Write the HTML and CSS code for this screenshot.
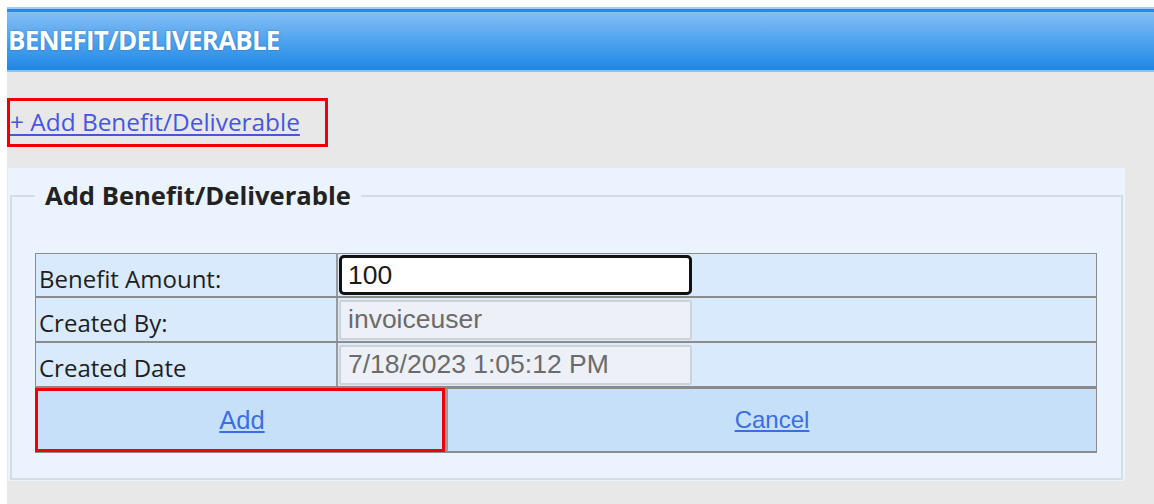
FILE: index.html
```html
<!DOCTYPE html>
<html lang="en">
<head>
<meta charset="utf-8">
<title>Benefit/Deliverable</title>
<link rel="stylesheet" href="styles.css">
</head>
<body>
<div class="page">
  <div class="section-bar">
    <h1 class="section-title">BENEFIT/DELIVERABLE</h1>
  </div>

  <div class="add-row">
    <a href="#" class="add-link hilite">+ Add Benefit/Deliverable</a>
  </div>

  <div class="panel">
    <fieldset class="entry">
      <legend>Add Benefit/Deliverable</legend>
      <table class="form-grid">
        <tr class="r1">
          <td class="lbl">Benefit Amount:</td>
          <td class="val"><input class="field active" type="text" value="100"></td>
        </tr>
        <tr class="r2">
          <td class="lbl">Created By:</td>
          <td class="val"><input class="field" type="text" value="invoiceuser" disabled></td>
        </tr>
        <tr class="r3">
          <td class="lbl">Created Date</td>
          <td class="val"><input class="field" type="text" value="7/18/2023 1:05:12 PM" disabled></td>
        </tr>
      </table>
      <div class="actions">
        <div class="action hilite-cell"><a href="#">Add</a></div>
        <div class="action"><a href="#">Cancel</a></div>
      </div>
    </fieldset>
  </div>
</div>
</body>
</html>
```

FILE: styles.css
```css
html, body {
  margin: 0;
  height: 100%;
}

body {
  background: #ffffff;
  padding: 7px 0 0 7px;
  box-sizing: border-box;
  font-family: "Open Sans", "Noto Sans", sans-serif;
  color: #1e1e1e;
}

.page {
  background: #e8e8e8;
  height: 100%;
  overflow: hidden;
}

/* blue section header */
.section-bar {
  height: 61px;
  border-top: 2px solid #9fcbf4;
  border-bottom: 2px solid #8fc2f2;
  box-shadow: inset 0 3px 0 #2a89e6;
  background: linear-gradient(#85bdf4 5%, #4ca2ee 55%, #1f87e5 100%);
  display: flex;
  align-items: center;
}

.section-title {
  margin: 0 0 0 1px;
  font-size: 26px;
  font-weight: 700;
  color: #ffffff;
  letter-spacing: -0.8px;
  text-shadow: 0 0 2px rgba(20, 80, 160, 0.6);
}

/* "+ Add" link row */
.add-row {
  padding: 26px 0 21px 0;
  display: flex;
}

.add-link {
  font-size: 24.4px;
  color: #4656e4;
  text-decoration: underline;
  text-underline-offset: 3px;
  padding: 7px 28px 9px 3px;
  line-height: 33px;
}

.hilite {
  outline: 3px solid #f00000;
  outline-offset: -3px;
}

/* entry panel */
.panel {
  margin-left: 1px;
  width: 1117px;
  background: #ebf3fe;
  padding-top: 10px;
  padding-bottom: 1px;
}

.entry {
  margin: 0 2px 0 2px;
  border: 2px solid #d6dce4;
  padding: 40px 24px 25px 23px;
}

.entry legend {
  margin-left: 0;
  padding: 0 10px 0 10px;
  font-size: 25.6px;
  font-weight: 700;
  color: #222222;
}

.form-grid {
  width: 100%;
  border-collapse: collapse;
  background: #d9eafd;
  border: 1px solid #8c8c8c;
}

.form-grid td {
  padding: 0;
  border-bottom: 2px solid #8c8c8c;
}

.form-grid .lbl {
  width: 297px;
  border-right: 2px solid #9a9a9a;
  font-size: 24px;
  line-height: 33px;
  padding: 6px 0 0 3px;
  color: #1e1e1e;
  vertical-align: middle;
}

.form-grid .val {
  padding-left: 1px;
}

.r1 td { height: 36px; }
.r2 td { height: 37px; }
.r3 td { height: 37px; border-bottom: 3px solid #8a8a8a; }

.field {
  display: block;
  box-sizing: border-box;
  width: 353px;
  height: 40px;
  margin: 1px 0;
  padding: 0 7px;
  font-family: "Liberation Sans", Arial, sans-serif;
  font-size: 26.5px;
  color: #6b6b6b;
  background: #edf1f7;
  border: 2px solid #cdd2d9;
  border-radius: 2px;
}

.field.active {
  border: 3px solid #111111;
  border-radius: 5px;
  background: #ffffff;
  color: #1a1a1a;
  padding-left: 6px;
}

.actions {
  display: flex;
  gap: 4px;
  background: #9a9a9a;
  border: 1px solid #8c8c8c;
  border-top: none;
  border-bottom: 2px solid #8c8c8c;
}

.action {
  height: 62px;
  background: #c6e0f9;
  display: flex;
  align-items: center;
  justify-content: center;
  font-family: "Liberation Sans", Arial, sans-serif;
  font-size: 24px;
}

.action:first-child { width: 408px; }
.action:last-child { flex: 1; }

.action a {
  color: #3a6ee6;
  text-decoration: underline;
}

.action:first-child a {
  font-size: 25.5px;
  margin-left: 4px;
}

.hilite-cell {
  outline: 3px solid #f00000;
  outline-offset: -2px;
}
```
